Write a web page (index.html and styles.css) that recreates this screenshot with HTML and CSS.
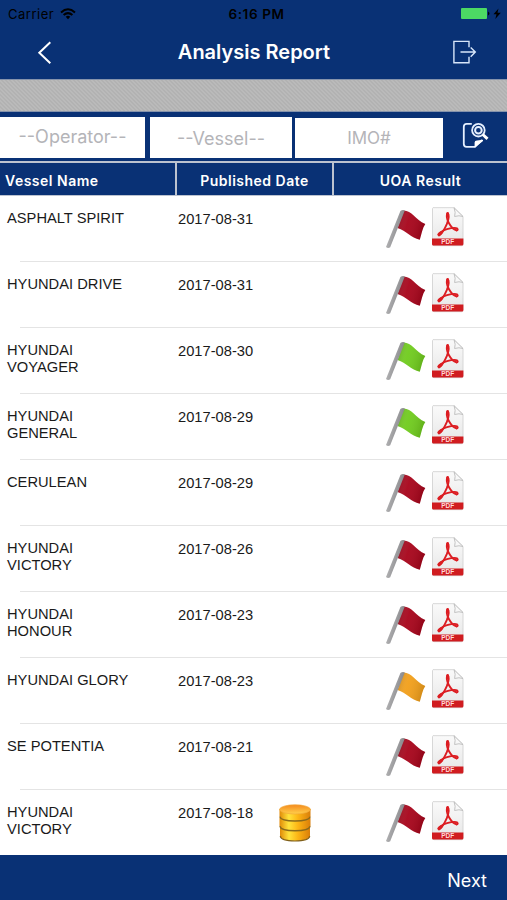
FILE: index.html
```
<!DOCTYPE html>
<html>
<head>
	<meta charset="utf-8">
	<title>Analysis Report</title>
	<link rel="stylesheet" href="styles.css">
</head>
<body>

	<!-- shared icons -->
	<svg class="defs" width="0" height="0">
		<defs>
			<linearGradient id="pole" x1="0" y1="0" x2="1" y2="0.4">
				<stop offset="0" stop-color="#c8c8c8"/>
				<stop offset="1" stop-color="#808084"/>
			</linearGradient>
			<linearGradient id="shade" x1="0" y1="0" x2="1" y2="0.3">
				<stop offset="0" stop-color="#000" stop-opacity="0.25"/>
				<stop offset="0.45" stop-color="#fff" stop-opacity="0.04"/>
				<stop offset="1" stop-color="#000" stop-opacity="0.12"/>
			</linearGradient>
			<linearGradient id="paper" x1="0" y1="0" x2="0" y2="1">
				<stop offset="0" stop-color="#fafafa"/>
				<stop offset="1" stop-color="#e6e6e6"/>
			</linearGradient>
			<linearGradient id="gold" x1="0" y1="0" x2="1" y2="0">
				<stop offset="0" stop-color="#e08a08"/>
				<stop offset="0.3" stop-color="#ffe33c"/>
				<stop offset="0.6" stop-color="#fcb414"/>
				<stop offset="1" stop-color="#d97e0a"/>
			</linearGradient>
			<linearGradient id="goldtop" x1="0" y1="0" x2="0" y2="1">
				<stop offset="0" stop-color="#f58a20"/>
				<stop offset="1" stop-color="#ffd04a"/>
			</linearGradient>
		</defs>
		<symbol id="flag" viewBox="0 0 42 42">
			<path d="M18.5 3.5C27 3.5 30 12.5 40.3 17C37.5 21 36.5 27 34.8 32.7C26 31 21.5 24 12.5 21Z" fill="currentColor"/>
			<path d="M18.5 3.5C27 3.5 30 12.5 40.3 17C37.5 21 36.5 27 34.8 32.7C26 31 21.5 24 12.5 21Z" fill="url(#shade)"/>
			<path d="M15.4 4Q17.5 2.4 19.8 3.4L5.2 40.3Q3 42 1 40Z" fill="url(#pole)"/>
		</symbol>
		<symbol id="pdf" viewBox="0 0 34 40">
			<path d="M2 0.7H23L32 9.5V37Q32 38.7 30.5 38.7H3Q1.5 38.7 1.5 37V1.5Z" fill="url(#paper)" stroke="#d2d2d2" stroke-width="0.9"/>
			<path d="M1 31.6H32.4V37Q32.4 38.5 31 38.5H2.4Q1 38.5 1 37Z" fill="#d01c20"/>
			<path d="M23 0.7Q25 5.5 23.6 9.5Q28 8 32 9.5Z" fill="#f8f8f8" stroke="#bcbcbc" stroke-width="0.9"/>
			<g fill="none" stroke="#dc1d22" stroke-linecap="round">
				<path d="M16.7 6.2C14.8 9 16.3 13.2 18 16.2C19.7 19.3 22 22.2 25.5 23.4" stroke-width="1.9"/>
				<path d="M16.7 6.2C18.4 8 17.5 13 15.8 17.2C13.8 21.8 11 26.8 8 28.4" stroke-width="1.9"/>
				<path d="M8 28.2C5.8 27.2 11 23.7 16 22.2C20 21 24.5 20.2 26.3 21.5C27.3 22.6 26.6 23.5 25.5 23.4" stroke-width="1.8"/>
				<path d="M16.6 6.8L16.5 9M8 27.5L10.2 25.8" stroke-width="3"/>
			</g>
			<text x="16.7" y="37.3" class="pdf-label">PDF</text>
		</symbol>
	</svg>

	<div class="app">
		<div class="status">
			<div class="carrier">
				<span>Carrier</span>
				<svg width="16" height="12" viewBox="0 0 16 12">
					<g fill="none" stroke="#000" stroke-width="2">
						<path d="M1 4.4Q8 -1.8 15 4.4"/>
						<path d="M3.6 7.1Q8 3.2 12.4 7.1"/>
					</g>
					<path d="M5.7 8.7Q8 6.9 10.3 8.7L8 11.3Z"/>
				</svg>
			</div>
			<div class="time">6:16 PM</div>
			<div class="power">
				<svg width="42" height="13" viewBox="0 0 42 13">
					<rect x="1" y="0" width="26" height="11" rx="1" fill="#4cd964"/>
					<path d="M28 3.5Q31 5.5 28 7.5Z"/>
					<path d="M38.5 0.5L33.5 6.3H36.5L35.3 11L40.8 4.8H37.5Z"/>
				</svg>
			</div>
		</div>

		<div class="navbar">
			<svg class="back" width="16" height="24" viewBox="0 0 16 24">
				<path d="M13.3 2.2L2.3 12.8L13.3 23.2" fill="none" stroke="#fff" stroke-width="2"/>
			</svg>
			<h1>Analysis Report</h1>
			<svg class="logout" width="25" height="25" viewBox="0 0 25 25">
				<path d="M17 7.2V1.4H1.9V22.7H17V16.7M8.5 12H22.5M18.7 7.5L23.3 12L18.7 16.7" fill="none" stroke="#d8e6fa" stroke-width="1.4"/>
			</svg>
		</div>

		<div class="band"></div>

		<div class="search">
			<div class="field operator">--Operator--</div>
			<div class="field vessel">--Vessel--</div>
			<div class="field imo">IMO#</div>
			<svg class="find" width="27" height="27" viewBox="0 0 27 27">
				<path d="M9.8 1.9H4.6Q1.8 1.9 1.8 4.7V22Q1.8 24.8 4.6 24.8H13L20 18" fill="none" stroke="#e6f0ff" stroke-width="1.8"/>
				<path d="M12.6 25.5V20.5Q12.6 18.6 15 18.5L21 17.8V19Z" fill="#fff"/>
				<circle cx="16.4" cy="8.2" r="6.3" fill="none" stroke="#e6f0ff" stroke-width="1.8"/>
				<circle cx="16.4" cy="8.2" r="3.3" fill="none" stroke="#e6f0ff" stroke-width="2"/>
				<path d="M20.8 12.5L25.5 16.8" stroke="#fff" stroke-width="3"/>
			</svg>
		</div>

		<div class="thead">
			<div class="th">Vessel Name</div>
			<div class="th">Published Date</div>
			<div class="th">UOA Result</div>
		</div>

		<div class="rows">
			<div class="row">
				<div class="name">ASPHALT SPIRIT</div>
				<div class="date">2017-08-31</div>
				<div class="extra"></div>
				<svg class="flag red"><use href="#flag"/></svg>
				<svg class="pdf"><use href="#pdf"/></svg>
			</div>
			<div class="row">
				<div class="name">HYUNDAI DRIVE</div>
				<div class="date">2017-08-31</div>
				<div class="extra"></div>
				<svg class="flag red"><use href="#flag"/></svg>
				<svg class="pdf"><use href="#pdf"/></svg>
			</div>
			<div class="row">
				<div class="name">HYUNDAI<br>VOYAGER</div>
				<div class="date">2017-08-30</div>
				<div class="extra"></div>
				<svg class="flag green"><use href="#flag"/></svg>
				<svg class="pdf"><use href="#pdf"/></svg>
			</div>
			<div class="row">
				<div class="name">HYUNDAI<br>GENERAL</div>
				<div class="date">2017-08-29</div>
				<div class="extra"></div>
				<svg class="flag green"><use href="#flag"/></svg>
				<svg class="pdf"><use href="#pdf"/></svg>
			</div>
			<div class="row">
				<div class="name">CERULEAN</div>
				<div class="date">2017-08-29</div>
				<div class="extra"></div>
				<svg class="flag red"><use href="#flag"/></svg>
				<svg class="pdf"><use href="#pdf"/></svg>
			</div>
			<div class="row">
				<div class="name">HYUNDAI<br>VICTORY</div>
				<div class="date">2017-08-26</div>
				<div class="extra"></div>
				<svg class="flag red"><use href="#flag"/></svg>
				<svg class="pdf"><use href="#pdf"/></svg>
			</div>
			<div class="row">
				<div class="name">HYUNDAI<br>HONOUR</div>
				<div class="date">2017-08-23</div>
				<div class="extra"></div>
				<svg class="flag red"><use href="#flag"/></svg>
				<svg class="pdf"><use href="#pdf"/></svg>
			</div>
			<div class="row">
				<div class="name">HYUNDAI GLORY</div>
				<div class="date">2017-08-23</div>
				<div class="extra"></div>
				<svg class="flag orange"><use href="#flag"/></svg>
				<svg class="pdf"><use href="#pdf"/></svg>
			</div>
			<div class="row">
				<div class="name">SE POTENTIA</div>
				<div class="date">2017-08-21</div>
				<div class="extra"></div>
				<svg class="flag red"><use href="#flag"/></svg>
				<svg class="pdf"><use href="#pdf"/></svg>
			</div>
			<div class="row">
				<div class="name">HYUNDAI<br>VICTORY</div>
				<div class="date">2017-08-18</div>
				<div class="extra">
					<svg width="34" height="38" viewBox="0 0 34 38">
						<path d="M2 24V32Q3 37 17 37T32 32V24Z" fill="url(#gold)"/>
						<path d="M2.2 32.2Q3 37 17 37T31.8 32.2" fill="none" stroke="#80601c" stroke-width="1.1"/>
						<path d="M1.5 14V22Q3 26.5 17 26.5T32.5 22V14Z" fill="url(#gold)"/>
						<path d="M1.8 22.2Q3 26.7 17 26.7T32.2 22.2" fill="none" stroke="#8a6a1c" stroke-width="1.4"/>
						<path d="M1.5 5V12.5Q3 17 17 17T32.5 12.5V5Z" fill="url(#gold)"/>
						<path d="M1.8 12.7Q3 17 17 17T32.2 12.7" fill="none" stroke="#8a6a1c" stroke-width="1.4"/>
						<ellipse cx="17" cy="5.4" rx="15.4" ry="4.6" fill="url(#goldtop)" stroke="#f0a83a" stroke-width="0.7"/>
					</svg>
				</div>
				<svg class="flag red"><use href="#flag"/></svg>
				<svg class="pdf"><use href="#pdf"/></svg>
			</div>
		</div>

		<div class="footer">Next</div>
	</div>

</body>
</html>
```
FILE: styles.css
```
* {
	box-sizing: border-box;
}

body {
	margin: 0;
	background-color: #fff;
	font-family: Inter, "Liberation Sans", sans-serif;
}

.defs {
	display: block;
}

.app {
	width: 507px;
	height: 900px;
	display: flex;
	flex-direction: column;
}

.status {
	height: 27px;
	flex: none;
	background-color: #093175;
	display: grid;
	grid-template-columns: 1fr 1fr 1fr;
	align-items: center;
	padding: 1px 5px 0 8px;
	font-size: 13px;
	line-height: 20px;
	color: #000;
}

.carrier {
	display: flex;
	align-items: center;
	gap: 6px;
	letter-spacing: 0.5px;
}

.time {
	text-align: center;
	font-weight: 600;
	font-size: 13.5px;
	letter-spacing: 0.6px;
	padding-left: 3px;
}

.power {
	display: flex;
	justify-content: flex-end;
}

.navbar {
	height: 52px;
	flex: none;
	background-color: #093175;
	display: flex;
	align-items: center;
	justify-content: space-between;
	padding: 0 30px 2px 37px;
	color: #fff;
}

.navbar h1 {
	margin: 0;
	padding-left: 3px;
	font-size: 20px;
	line-height: 26px;
	font-weight: 600;
}

.band {
	height: 33px;
	flex: none;
	border-top: 1px solid #8593ac;
	border-bottom: 1px solid #8593ac;
	background: repeating-linear-gradient(45deg, #b2b2b2 0, #b2b2b2 1.414px, #bababa 1.414px, #bababa 2.828px);
}

.search {
	height: 49px;
	flex: none;
	background-color: #093175;
	display: flex;
	align-items: flex-start;
	padding-top: 5px;
}

.field {
	height: 41px;
	background-color: #fff;
	text-align: center;
	color: #b4b4b8;
	font-size: 18px;
	line-height: 39px;
}

.operator {
	width: 145px;
}

.vessel {
	width: 142px;
	margin-left: 5px;
	line-height: 43px;
}

.imo {
	width: 148px;
	height: 40px;
	margin: 1px 0 0 3px;
	font-size: 17px;
	line-height: 41px;
}

.find {
	margin: 5px 0 0 19px;
}

.thead {
	height: 35px;
	flex: none;
	display: grid;
	grid-template-columns: 175px 155px 1fr;
	grid-template-rows: 32px;
	gap: 2px;
	padding: 2px 0 1px;
	background-color: #bcc3d0;
}

.th {
	background-color: #093175;
	color: #fff;
	text-align: center;
	padding-top: 5px;
	font-size: 14px;
	font-weight: 600;
	line-height: 26px;
	letter-spacing: 0.5px;
}

.th:first-child {
	text-align: left;
	padding-left: 5px;
}

.rows {
	height: 659px;
	flex: none;
}

.row {
	height: 66px;
	display: grid;
	grid-template-columns: 171px 100px 107px 46px 36px;
	padding: 11px 0 0 7px;
	font-family: "Liberation Sans", Arial, sans-serif;
	font-size: 14.7px;
	line-height: 17px;
	color: #1a1a1a;
	background: linear-gradient(#e4e4e4, #e4e4e4) 20px 100% / 487px 1px no-repeat;
}

.row:last-child {
	height: 65px;
	background: none;
}

.name {
	padding-top: 3px;
}

.date {
	padding-top: 4px;
}

.extra {
	padding: 3px 0 0 0;
}

.extra svg {
	display: block;
}

.flag {
	width: 42px;
	height: 42px;
}

.red {
	color: #a8061c;
}

.green {
	color: #71cc1f;
}

.orange {
	color: #f2a01c;
}

.pdf {
	width: 34px;
	height: 40px;
}

.pdf-label {
	font: bold 6.5px "Liberation Sans", sans-serif;
	fill: #ffd9d9;
	text-anchor: middle;
}

.footer {
	height: 45px;
	flex: none;
	background-color: #093175;
	color: #fff;
	text-align: right;
	padding: 12px 20px 0 0;
	font-size: 18px;
	line-height: 27px;
}
```
